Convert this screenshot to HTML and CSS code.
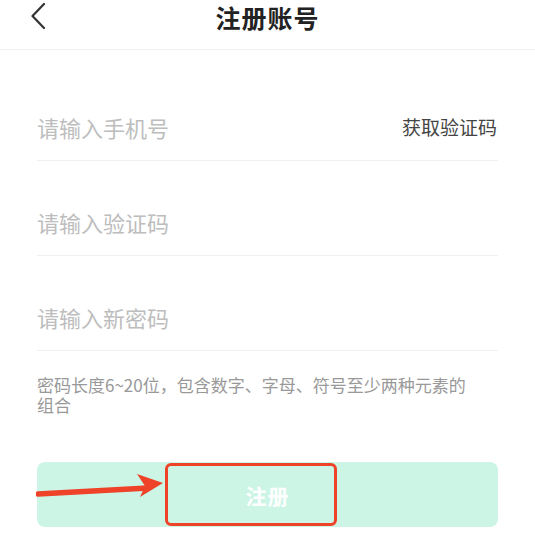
FILE: index.html
```html
<!DOCTYPE html>
<html lang="zh-CN">
<head>
<meta charset="utf-8">
<title>注册账号</title>
<link rel="stylesheet" href="styles.css">
</head>
<body>
<header class="header">
  <svg class="back" width="18" height="28" viewBox="0 0 18 28"><path d="M14 3 L2.5 15 L14 27" fill="none" stroke="#333" stroke-width="2.2" stroke-linecap="round" stroke-linejoin="round"/></svg>
  <h1 class="title">注册账号</h1>
</header>
<main class="form">
  <div class="field">
    <input class="input" type="tel" placeholder="请输入手机号">
    <span class="code">获取验证码</span>
  </div>
  <div class="field">
    <input class="input" type="text" placeholder="请输入验证码">
  </div>
  <div class="field">
    <input class="input" type="password" placeholder="请输入新密码">
  </div>
  <p class="hint">密码长度6~20位，包含数字、字母、符号至少两种元素的组合</p>
  <div class="submit-wrap">
    <button class="submit">注册</button>
    <div class="mark"></div>
    <svg class="arrow" width="140" height="40" viewBox="0 0 140 40"><path d="M2 28 L112 22" stroke="#ee4229" stroke-width="5.5" stroke-linecap="round"/><path d="M101 8 L127 17 L104 31 L109 20 Z" fill="#ee4229"/></svg>
  </div>
</main>
</body>
</html>
```
FILE: styles.css
```css
* { box-sizing: border-box; }
html, body { margin: 0; padding: 0; background: #fff; }
body { font-family: "Noto Sans CJK SC", "Noto Sans", sans-serif; width: 535px; }
.header {
  position: relative;
  height: 50px;
  border-bottom: 1px solid #f2f2f2;
  display: flex;
  align-items: flex-start;
  justify-content: center;
}
.back { position: absolute; left: 30px; top: 1px; }
.title {
  margin: 0;
  font-size: 25px;
  font-weight: 700;
  color: #222;
  line-height: 35px;
  letter-spacing: 1px;
}
.form { padding: 16px 37px 0 37px; }
.field {
  display: flex;
  align-items: center;
  padding-top: 46px;
  padding-bottom: 18px;
  border-bottom: 1px solid #f0f0f0;
}
.input {
  flex: 1;
  border: none;
  outline: none;
  padding: 0;
  margin: 0;
  height: 30px;
  font-family: inherit;
  font-size: 22px;
  color: #333;
  background: transparent;
}
.input::placeholder { color: #bdbdbd; }
.code { font-size: 19px; color: #444; line-height: 30px; margin-right: 1px; }
.hint {
  margin: 24px 0 0 0;
  padding-right: 22px;
  font-size: 17px;
  line-height: 20px;
  color: #999;
}
.submit-wrap { position: relative; margin-top: 47px; }
.submit {
  display: block;
  width: 100%;
  height: 65px;
  border: none;
  border-radius: 8px;
  background: #cdf5e6;
  color: #fff;
  font-family: inherit;
  font-size: 21px;
  font-weight: 700;
  letter-spacing: 1px;
}
.mark {
  position: absolute;
  left: 128px;
  top: 1px;
  width: 172px;
  height: 63px;
  border: 3px solid #ee4229;
  border-radius: 6px;
}
.arrow { position: absolute; left: -1px; top: 4px; }
```
